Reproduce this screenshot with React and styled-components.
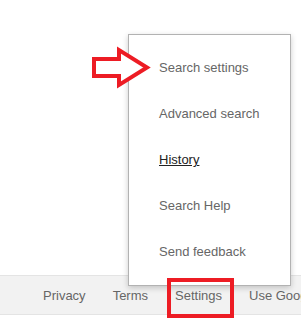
import React from 'react';
import styled, { createGlobalStyle } from 'styled-components';

const menuItems = [
  { id: 1, text: 'Search settings' },
  { id: 2, text: 'Advanced search' },
  { id: 3, text: 'History', active: true },
  { id: 4, text: 'Search Help' },
  { id: 5, text: 'Send feedback' },
];

const footerLinks = ['Privacy', 'Terms', 'Settings', 'Use Google.com'];

const GlobalStyle = createGlobalStyle`
  body {
    margin: 0;
    background: #fff;
    font-family: "Liberation Sans", Arial, sans-serif;
  }
`;

const App = () => {
  return (
    <>
      <GlobalStyle />
      <Page>
        <Main />
        <Footer>
          {footerLinks.map((text) => (
            <FooterLink key={text} href='#'>
              {text}
            </FooterLink>
          ))}
        </Footer>

        <Menu>
          {menuItems.map((item) => (
            <MenuItem key={item.id} href='#' $active={item.active}>
              {item.text}
            </MenuItem>
          ))}
        </Menu>

        {/* red annotations drawn over the page */}
        <Arrow viewBox='0 0 70 48' width='70' height='48'>
          <polygon
            points='6,15 31,15 31,6 59,23.5 31,41 31,32 6,32'
            fill='#fff'
            stroke='#ed1c24'
            strokeWidth='4'
            strokeLinejoin='miter'
          />
        </Arrow>
        <Highlight />
      </Page>
    </>
  );
};

export default App;

const Page = styled.div`
  position: relative;
  display: flex;
  flex-direction: column;
  height: 319px;
  padding-bottom: 4px;
  box-sizing: border-box;
  overflow: hidden;
`;

const Main = styled.div`
  flex: 1;
`;

const Footer = styled.footer`
  display: flex;
  align-items: center;
  gap: 27px;
  height: 40px;
  padding-left: 43px;
  box-sizing: border-box;
  background: #f2f2f2;
  border-top: 1px solid #e4e4e4;
  border-bottom: 1px solid #e4e4e4;
  white-space: nowrap;
`;

const FooterLink = styled.a`
  font-size: 13px;
  color: #666;
  text-decoration: none;
`;

const Menu = styled.div`
  position: absolute;
  left: 128px;
  top: 34px;
  width: 163px;
  box-sizing: border-box;
  padding: 10px 0;
  background: #fff;
  border: 1px solid rgba(0, 0, 0, 0.3);
  box-shadow: 0 2px 6px rgba(0, 0, 0, 0.2);
  display: flex;
  flex-direction: column;
`;

const MenuItem = styled.a`
  display: block;
  height: 46px;
  line-height: 46px;
  padding-left: 30px;
  font-size: 13px;
  color: ${({ $active }) => ($active ? '#222' : '#666')};
  text-decoration: ${({ $active }) => ($active ? 'underline' : 'none')};
  white-space: nowrap;
`;

const Arrow = styled.svg`
  position: absolute;
  left: 88px;
  top: 44px;
  overflow: visible;
`;

const Highlight = styled.div`
  position: absolute;
  left: 167px;
  top: 278px;
  width: 67px;
  height: 40px;
  box-sizing: border-box;
  border: 4px solid #ed1c24;
`;
